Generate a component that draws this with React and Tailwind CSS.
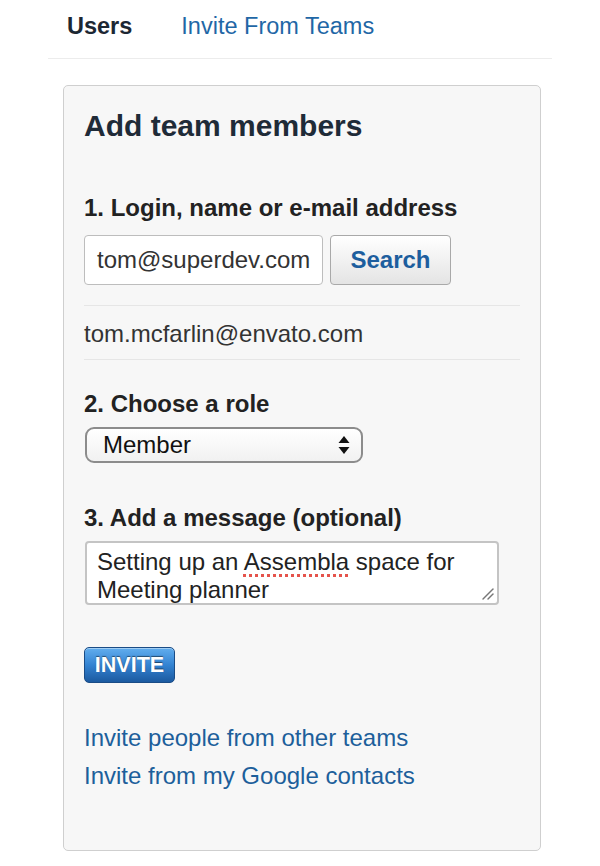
import React from "react";

const font = { fontFamily: '"Liberation Sans", Arial, Helvetica, sans-serif' };

const Separator = ({ className = "" }) => <div className={`h-px w-[436px] bg-[#e6e6e6] ${className}`} />;

const SelectArrows = () => (
    <svg width="12" height="22" viewBox="0 0 12 22" className="shrink-0">
        <path d="M6 2 L11.5 9 L0.5 9 Z" fill="#111" />
        <path d="M6 20 L11.5 13 L0.5 13 Z" fill="#111" />
    </svg>
);

const ResizeGrip = () => (
    <svg width="14" height="14" viewBox="0 0 14 14" className="absolute bottom-[3px] right-[3px]">
        <path d="M13 3 L3 13" stroke="#777" strokeWidth="1.4" strokeLinecap="round" />
        <path d="M13 8 L8 13" stroke="#777" strokeWidth="1.4" strokeLinecap="round" />
    </svg>
);

const App = () => {
    return (
        <div className="min-h-[866px] w-[600px] bg-white" style={font}>
            <div className="mx-[48px] w-[504px]">
                {/* tabs */}
                <div className="flex gap-[49px] border-b border-[#ececec] pt-[12px] pb-[18px] pl-[19px] text-[23.5px] leading-[28px]">
                    <span className="font-bold text-[#1c2733]">Users</span>
                    <span className="text-[#1f67a6]">Invite From Teams</span>
                </div>

                {/* panel */}
                <div className="mt-[26px] ml-[15px] w-[478px] rounded-[5px] border border-[#cfcfcf] bg-[#f7f7f7] pt-[23px] pb-[55px] pl-[20px]">
                    <h2 className="text-[30px] font-bold leading-[34px] text-[#1f2b38]">Add team members</h2>

                    <p className="mt-[52px] text-[24px] font-bold leading-[26px] text-[#222]">1. Login, name or e-mail address</p>
                    <div className="mt-[14px] flex gap-[7px]">
                        <div className="flex h-[50px] w-[239px] items-center rounded-[4px] border border-[#bdbdbd] bg-white pl-[12px] text-[24px] text-[#333]">
                            tom@superdev.com
                        </div>
                        <button className="h-[50px] w-[121px] rounded-[4px] border border-[#a9a9a9] bg-gradient-to-b from-white to-[#e4e4e4] text-[24px] font-bold text-[#1d5e9e]">
                            Search
                        </button>
                    </div>
                    <Separator className="mt-[20px]" />
                    <p className="mt-[15px] text-[24px] leading-[26px] text-[#333]">tom.mcfarlin@envato.com</p>
                    <Separator className="mt-[12px]" />

                    <p className="mt-[31px] text-[24px] font-bold leading-[26px] text-[#222]">2. Choose a role</p>
                    <div className="mt-[10px] ml-px flex h-[36px] w-[278px] items-center justify-between rounded-[9px] border-2 border-[#8c8c8c] bg-gradient-to-b from-white to-[#f1f1f1] pr-[11px] pl-[16px]">
                        <span className="text-[24px] text-[#111]">Member</span>
                        <SelectArrows />
                    </div>

                    <p className="mt-[42px] text-[24px] font-bold leading-[26px] text-[#222]">3. Add a message (optional)</p>
                    <div className="relative mt-[10px] ml-px h-[64px] w-[414px] rounded-[4px] border-2 border-[#c4c4c4] bg-white pt-[5px] pl-[10px] text-[24px] leading-[28px] text-[#222]">
                        <p>
                            Setting up an{" "}
                            <span className="underline decoration-[#e5534b] decoration-dotted decoration-[3px] underline-offset-[4px]">Assembla</span>{" "}
                            space for
                        </p>
                        <p>Meeting planner</p>
                        <ResizeGrip />
                    </div>

                    <button className="mt-[42px] flex h-[36px] w-[91px] items-center justify-center rounded-[5px] border border-[#1a4c86] bg-gradient-to-b from-[#62aeee] via-[#3383d2] to-[#1c5aa0] text-[21.5px] font-bold text-white [text-shadow:0_-1px_1px_rgba(0,0,0,0.5)] shadow-[inset_0_1px_0_rgba(255,255,255,0.4)]">
                        INVITE
                    </button>

                    <div className="mt-[36px] text-[24px] leading-[38px] text-[#1d5f9b]">
                        <p>Invite people from other teams</p>
                        <p>Invite from my Google contacts</p>
                    </div>
                </div>
            </div>
        </div>
    );
};

export default App;
